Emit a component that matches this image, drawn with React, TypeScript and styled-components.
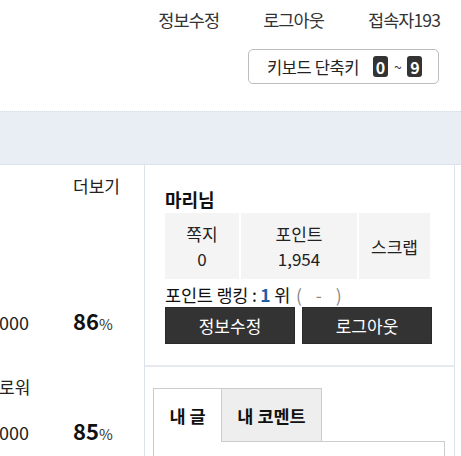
import React from "react";
import styled, { createGlobalStyle } from "styled-components";

const Global = createGlobalStyle`
  html, body { margin: 0; padding: 0; background: #fff; overflow: hidden; }
  body { font-family: "Noto Sans CJK KR", "Noto Sans", sans-serif; color: #222; }
  * { box-sizing: border-box; }
`;

const Page = styled.div`
  width: 461px;
  height: 456px;
  overflow: hidden;
`;

const TopLinks = styled.div`
  display: flex;
  justify-content: flex-end;
  gap: 44px;
  padding: 8px 21px 0 0;
  height: 49px;
  font-size: 17.5px;
  letter-spacing: -0.9px;
  line-height: 24px;
  color: #333;
`;

const TopLink = styled.span``;

const ShortcutRow = styled.div`
  display: flex;
  justify-content: flex-end;
  padding-right: 22px;
  height: 62px;
`;

const ShortcutBox = styled.div`
  width: 191px;
  height: 35px;
  border: 1px solid #bdbdbd;
  border-radius: 5px;
  display: flex;
  align-items: center;
  padding: 0 0 0 18px;
  gap: 4px;
  font-size: 16.5px;
  letter-spacing: -0.4px;
  color: #222;
`;

const ShortcutLabel = styled.span`
  margin-right: 10px;
`;

const Key = styled.span`
  display: inline-flex;
  align-items: center;
  justify-content: center;
  width: 15px;
  height: 21px;
  border-radius: 3px;
  background: #333;
  color: #fff;
  font-weight: 700;
  font-size: 16px;
  letter-spacing: 0;
`;

const Tilde = styled.span`
  font-size: 14px;
  color: #333;
  margin: 0 2px;
`;

const Band = styled.div`
  height: 54px;
  background: #e9eef5;
  border-top: 1px dotted #d6dde6;
  border-bottom: 1px solid #dde3ea;
`;

const Main = styled.div`
  display: grid;
  grid-template-columns: 144px 311px;
`;

const LeftCol = styled.div`
  display: flex;
  flex-direction: column;
  align-items: flex-end;
`;

const MoreRow = styled.div`
  display: flex;
  justify-content: flex-end;
  width: 144px;
  padding: 9px 24px 0 0;
  height: 101px;
  font-size: 17px;
  line-height: 24px;
  color: #222;
`;

const Item = styled.div`
  width: 344px;
  flex-shrink: 0;
  display: flex;
  flex-direction: column;
  margin-bottom: 43px;
`;

const ItemTitle = styled.div`
  height: 41px;
  font-size: 17px;
  line-height: 22px;
  white-space: nowrap;
  color: #222;
`;

const ItemValues = styled.div`
  display: grid;
  grid-template-columns: 229px 1fr;
  align-items: baseline;
  height: 26px;
  line-height: 26px;
`;

const Amount = styled.span`
  text-align: right;
  font-size: 18px;
  color: #222;
  white-space: nowrap;
`;

const Rate = styled.span`
  padding-left: 44px;
  font-size: 22px;
  font-weight: 700;
  color: #111;
`;

const Pct = styled.span`
  font-size: 15px;
  font-weight: 400;
  color: #333;
`;

const RightCol = styled.div`
  border-left: 1px solid #dde3ea;
  border-right: 1px solid #dde3ea;
`;

const UserBox = styled.div`
  padding: 22px 23px 21px 20px;
  border-bottom: 2px solid #e6eaef;
`;

const UserName = styled.div`
  font-size: 18px;
  font-weight: 700;
  line-height: 24px;
  color: #111;
  margin-bottom: 2px;
`;

const Stats = styled.div`
  display: grid;
  grid-template-columns: 74px 116px 71px;
  gap: 2px;
  height: 66px;
`;

const StatCell = styled.div`
  background: #f4f4f4;
  display: flex;
  flex-direction: column;
  align-items: center;
  justify-content: center;
  font-size: 17px;
  line-height: 25px;
  color: #222;
`;

const Ranking = styled.div`
  margin-top: 5px;
  font-size: 17.5px;
  line-height: 22px;
  letter-spacing: -0.2px;
  color: #111;
  white-space: pre;
`;

const RankNum = styled.b`
  color: #1b5ea6;
`;

const RankDiff = styled.span`
  color: #888;
  margin-left: 6px;
  letter-spacing: 2px;
`;

const Buttons = styled.div`
  display: grid;
  grid-template-columns: 130px 130px;
  gap: 7px;
  margin-top: 1px;
`;

const DarkButton = styled.button`
  height: 37px;
  background: #333;
  border: 1px solid #2a2a2a;
  color: #fff;
  font-family: inherit;
  font-size: 17px;
  padding: 0;
  cursor: pointer;
`;

const PostsBox = styled.div`
  padding: 21px 8px 0 8px;
`;

const Tabs = styled.div`
  display: flex;
  width: 292px;
  border-bottom: 1px solid #ccc;
`;

const Tab = styled.div<{ $active?: boolean }>`
  width: ${(p) => (p.$active ? "69px" : "100px")};
  height: ${(p) => (p.$active ? "54px" : "53px")};
  margin-bottom: ${(p) => (p.$active ? "-1px" : "0")};
  display: flex;
  align-items: center;
  justify-content: center;
  font-size: 17.5px;
  font-weight: 700;
  color: #111;
  background: ${(p) => (p.$active ? "#fff" : "#eee")};
  border: 1px solid #ccc;
  border-bottom: none;
  border-left: ${(p) => (p.$active ? "1px solid #ccc" : "none")};
`;

const TabBody = styled.div`
  width: 292px;
  height: 40px;
  border-left: 1px solid #ccc;
  border-right: 1px solid #ccc;
`;

export default function App() {
  return (
    <Page>
      <Global />
      <TopLinks>
        <TopLink>정보수정</TopLink>
        <TopLink>로그아웃</TopLink>
        <TopLink>접속자193</TopLink>
      </TopLinks>
      <ShortcutRow>
        <ShortcutBox>
          <ShortcutLabel>키보드 단축키</ShortcutLabel>
          <Key>0</Key>
          <Tilde>~</Tilde>
          <Key>9</Key>
        </ShortcutBox>
      </ShortcutRow>
      <Band />
      <Main>
        <LeftCol>
          <MoreRow>더보기</MoreRow>
          <Item>
            <ItemTitle>이벤트 당첨</ItemTitle>
            <ItemValues>
              <Amount>1,000,000</Amount>
              <Rate>
                86<Pct>%</Pct>
              </Rate>
            </ItemValues>
          </Item>
          <Item>
            <ItemTitle>첫가입 회원 이벤트포인트 팔로워</ItemTitle>
            <ItemValues>
              <Amount>500,000</Amount>
              <Rate>
                85<Pct>%</Pct>
              </Rate>
            </ItemValues>
          </Item>
        </LeftCol>
        <RightCol>
          <UserBox>
            <UserName>마리님</UserName>
            <Stats>
              <StatCell>
                <span>쪽지</span>
                <span>0</span>
              </StatCell>
              <StatCell>
                <span>포인트</span>
                <span>1,954</span>
              </StatCell>
              <StatCell>
                <span>스크랩</span>
              </StatCell>
            </Stats>
            <Ranking>
              포인트 랭킹 : <RankNum>1</RankNum> 위<RankDiff>(  -  )</RankDiff>
            </Ranking>
            <Buttons>
              <DarkButton>정보수정</DarkButton>
              <DarkButton>로그아웃</DarkButton>
            </Buttons>
          </UserBox>
          <PostsBox>
            <Tabs>
              <Tab $active>내 글</Tab>
              <Tab>내 코멘트</Tab>
            </Tabs>
            <TabBody />
          </PostsBox>
        </RightCol>
      </Main>
    </Page>
  );
}
